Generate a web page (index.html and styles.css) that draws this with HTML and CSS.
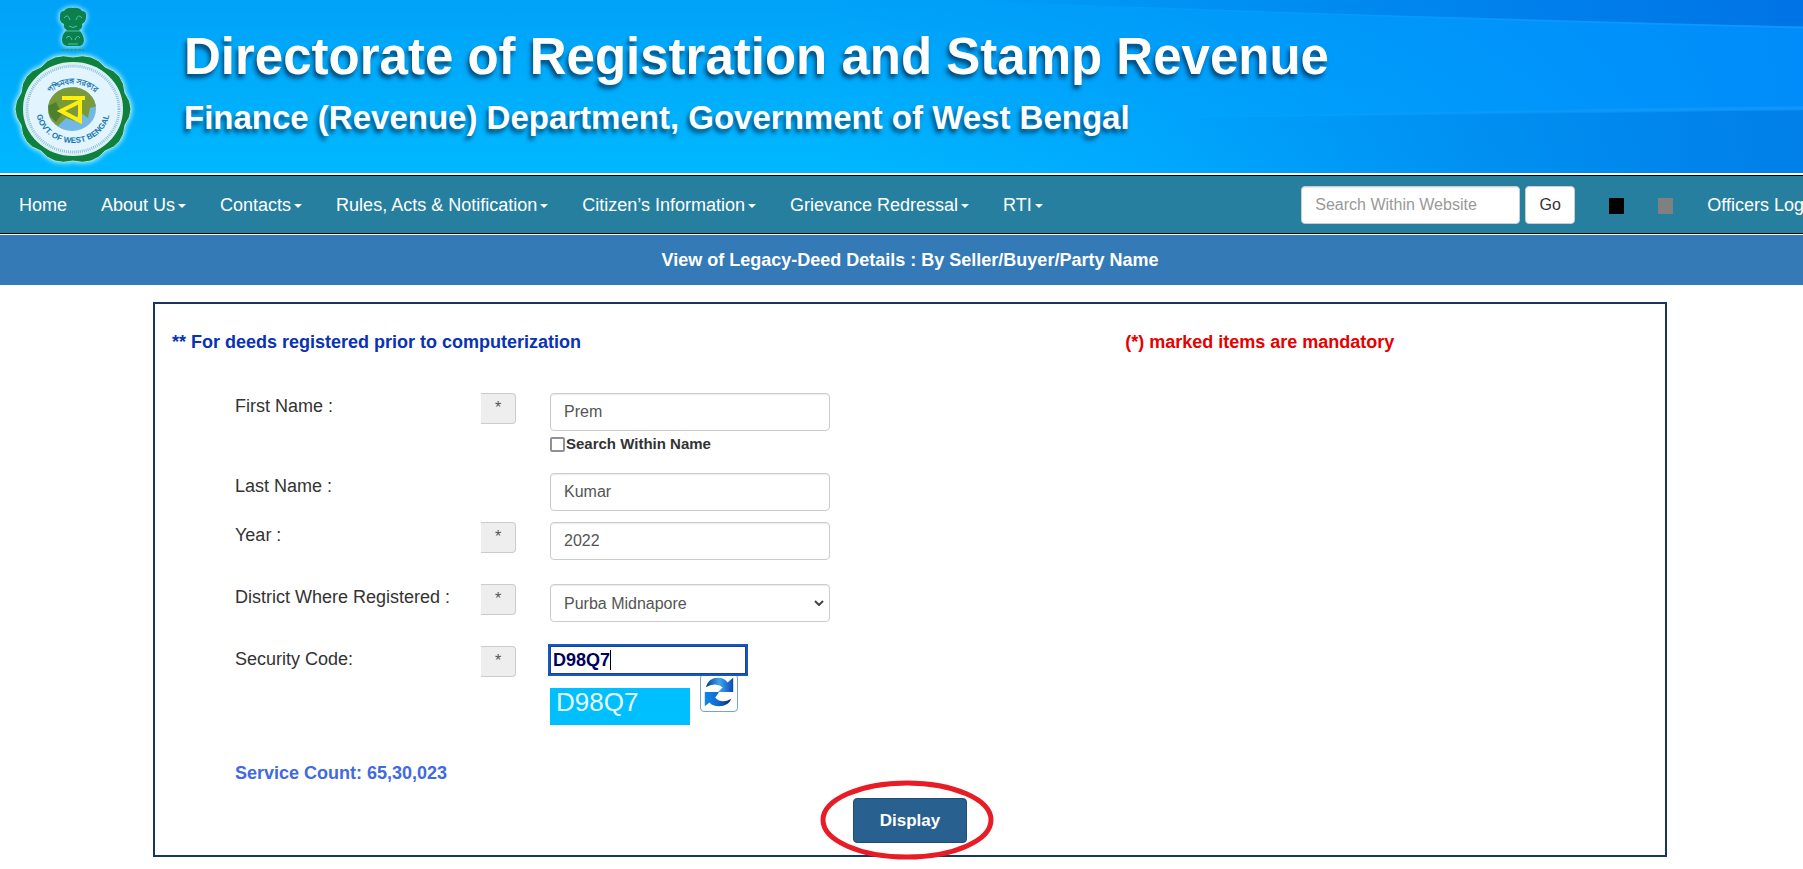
FILE: index.html
```html
<!DOCTYPE html>
<html lang="en">
<head>
  <meta charset="UTF-8">
  <meta name="viewport" content="width=device-width, initial-scale=1.0">
  <title>Directorate of Registration and Stamp Revenue</title>
  <link rel="stylesheet" href="styles.css">
</head>
<body>
  <div class="page">

    <!-- Banner -->
    <header class="banner">
      <svg class="banner-rays" viewBox="0 0 1820 173" preserveAspectRatio="none" aria-hidden="true">
        <defs>
          <linearGradient id="rayTop" x1="0" x2="1" y1="0" y2="0">
            <stop offset="0" stop-color="#0070dc" stop-opacity="0"/>
            <stop offset="1" stop-color="#0068dc" stop-opacity="0.7"/>
          </linearGradient>
          <linearGradient id="rayLow" x1="0" x2="1" y1="0" y2="0">
            <stop offset="0" stop-color="#0078d8" stop-opacity="0"/>
            <stop offset="1" stop-color="#0074d8" stop-opacity="0.55"/>
          </linearGradient>
          <linearGradient id="rayLine" x1="0" x2="1" y1="0" y2="0">
            <stop offset="0" stop-color="#20a8ff" stop-opacity="0"/>
            <stop offset="1" stop-color="#20a0ff" stop-opacity="0.5"/>
          </linearGradient>
        </defs>
        <path d="M950 0H1820V27Q1300 14 950 0Z" fill="url(#rayTop)"/>
        <path d="M950 0Q1300 14 1820 27V29Q1300 16 950 0Z" fill="url(#rayLine)"/>
        <path d="M1150 119Q1500 112 1820 109V173H1150Z" fill="url(#rayLow)"/>
        <path d="M1150 118Q1500 110 1820 106V110Q1500 114 1150 119Z" fill="url(#rayLine)"/>
      </svg>
      <svg class="emblem" viewBox="0 0 146 173" role="img" aria-label="Government of West Bengal emblem">
        <defs>
          <filter id="glow" x="-20%" y="-20%" width="140%" height="140%">
            <feGaussianBlur stdDeviation="2"/>
          </filter>
          <clipPath id="globe"><ellipse cx="72" cy="109" rx="24" ry="22"/></clipPath>
          <path id="scallop" d="M125 93Q124 73 105 67Q93 52 73 57Q53 52 41 67Q22 73 21 93Q9 109 21 125Q22 145 41 151Q53 166 73 161Q93 166 105 151Q124 145 125 125Q137 109 125 93Z"/>
          <path id="lions" d="M64 11Q67 7 73 8Q79 7 82 11Q87 11 86 17Q86 22 82 24Q83 28 79 30Q84 35 84 41Q83 46 79 46H67Q62 45 62 40Q62 34 67 30Q63 28 64 24Q59 22 60 16Q60 11 64 11Z"/>
          <path id="arcTop" d="M41 109A32 30 0 0 1 104 109"/>
          <path id="arcLow" d="M36 109A37 34 0 0 0 110 109"/>
        </defs>
        <g fill="#8fe6ff" stroke="#8fe6ff" stroke-width="3" filter="url(#glow)">
          <use href="#scallop"/>
          <use href="#lions"/>
        </g>
        <use href="#lions" fill="#0b7f4c"/>
        <path d="M64 18Q68 13 70 20M76 20Q78 13 82 18M69 26Q73 29 77 26M66 31H80M66 38Q70 34 72 40M75 40Q77 34 80 38M68 44H78" fill="none" stroke="#4fc6a8" stroke-width="1"/>
        <path d="M62 50H84" stroke="#2a9a92" stroke-width="2" stroke-dasharray="3 1"/>
        <use href="#scallop" fill="#0f8040" stroke="#9fe8e0" stroke-width="1"/>
        <ellipse cx="73" cy="109" rx="49" ry="46" fill="#e6f5fd" stroke="#d4f2ee" stroke-width="2"/>
        <ellipse cx="73" cy="109" rx="46" ry="43" fill="none" stroke="#8cc0e6" stroke-width="3" stroke-dasharray="1 1"/>
        <ellipse cx="73" cy="109" rx="43" ry="40" fill="#e2f4fd"/>
        <g clip-path="url(#globe)">
          <rect x="46" y="85" width="54" height="48" fill="#72b8e6"/>
          <path d="M46 98Q54 84 66 88L86 86Q98 94 98 106L90 108L88 118L80 112L74 121L66 118L58 126L48 118Z" fill="#7a9a38"/>
          <path d="M48 106L56 102L62 114L56 122L50 116Z" fill="#4d8030"/>
        </g>
        <path d="M62 98H85M80 99V121L61 111L79 102" fill="none" stroke="#ffee10" stroke-width="4"/>
        <text class="emblem-text"><textPath href="#arcTop" startOffset="50%" text-anchor="middle">পশ্চিমবঙ্গ সরকার</textPath></text>
        <text class="emblem-text"><textPath href="#arcLow" startOffset="50%" text-anchor="middle">GOVT. OF WEST BENGAL</textPath></text>
      </svg>
      <div class="banner-text">
        <h1>Directorate of Registration and Stamp Revenue</h1>
        <p>Finance (Revenue) Department, Government of West Bengal</p>
      </div>
    </header>

    <!-- Main menu -->
    <nav class="navbar">
      <ul class="menu">
        <li><a href="#">Home</a></li>
        <li><a href="#">About Us<span class="caret"></span></a></li>
        <li><a href="#">Contacts<span class="caret"></span></a></li>
        <li><a href="#">Rules, Acts &amp; Notification<span class="caret"></span></a></li>
        <li><a href="#">Citizen’s Information<span class="caret"></span></a></li>
        <li><a href="#">Grievance Redressal<span class="caret"></span></a></li>
        <li><a href="#">RTI<span class="caret"></span></a></li>
      </ul>
      <form class="search">
        <input type="text" class="form-control" placeholder="Search Within Website" aria-label="Search Within Website">
        <button type="button" class="go-btn">Go</button>
      </form>
      <div class="themes">
        <button type="button" class="swatch swatch-black" aria-label="Black theme"></button>
        <button type="button" class="swatch swatch-gray" aria-label="Gray theme"></button>
      </div>
      <a class="login" href="#">Officers Login</a>
    </nav>

    <h2 class="page-title">View of Legacy-Deed Details : By Seller/Buyer/Party Name</h2>

    <!-- Search form -->
    <main class="panel">
      <div class="notes">
        <p class="note-info">** For deeds registered prior to computerization</p>
        <p class="note-required">(*) marked items are mandatory</p>
      </div>

      <form class="deed-form">
        <div class="form-row tight">
          <label for="firstName">First Name :</label>
          <span class="addon">*</span>
          <div class="field">
            <input type="text" class="form-control" id="firstName" value="Prem">
            <div class="check-line">
              <input type="checkbox" id="withinName">
              <label for="withinName">Search Within Name</label>
            </div>
          </div>
        </div>

        <div class="form-row tight">
          <label for="lastName">Last Name :</label>
          <span></span>
          <div class="field">
            <input type="text" class="form-control" id="lastName" value="Kumar">
          </div>
        </div>

        <div class="form-row">
          <label for="year">Year :</label>
          <span class="addon">*</span>
          <div class="field">
            <input type="text" class="form-control" id="year" value="2022">
          </div>
        </div>

        <div class="form-row">
          <label for="district">District Where Registered :</label>
          <span class="addon">*</span>
          <div class="field select-field">
            <select class="form-control" id="district">
              <option>Purba Midnapore</option>
            </select>
            <svg class="chevron" viewBox="0 0 10 6" aria-hidden="true"><path d="M1 1L5 5L9 1" fill="none" stroke="#444" stroke-width="2"/></svg>
          </div>
        </div>

        <div class="form-row">
          <label for="code">Security Code:</label>
          <span class="addon">*</span>
          <div class="field code-field">
            <input type="text" class="code-input" id="code" value="D98Q7">
            <span class="text-cursor"></span>
            <div class="captcha-line">
              <span class="captcha">D98Q7</span>
              <button type="button" class="refresh" aria-label="Refresh code">
                <svg viewBox="0 0 38 38" aria-hidden="true">
                  <defs>
                    <linearGradient id="arrowTop" x1="0" x2="1" y1="0" y2="0">
                      <stop offset="0" stop-color="#0b3a8c"/>
                      <stop offset="0.5" stop-color="#3fa4f0"/>
                      <stop offset="1" stop-color="#0a49b4"/>
                    </linearGradient>
                    <linearGradient id="arrowLow" x1="0" x2="1" y1="0" y2="0">
                      <stop offset="0" stop-color="#1287ea"/>
                      <stop offset="0.5" stop-color="#1468cc"/>
                      <stop offset="1" stop-color="#06266e"/>
                    </linearGradient>
                  </defs>
                  <path d="M5 13Q8 3 18 3Q25 3 28 8L34 3V18L18 18L23 13Q15 7 5 13Z" fill="url(#arrowTop)"/>
                  <path d="M32 25Q29 33 19 33Q12 33 9 29L4 33V18L19 18L15 24Q22 31 32 25Z" fill="url(#arrowLow)"/>
                </svg>
              </button>
            </div>
          </div>
        </div>

        <p class="service-count">Service Count: 65,30,023</p>

        <div class="actions">
          <button type="button" class="display-btn">Display</button>
          <svg class="marker" viewBox="0 0 174 80" aria-hidden="true"><ellipse cx="87" cy="40" rx="84" ry="37" fill="none" stroke="#e81c24" stroke-width="5"/></svg>
        </div>
      </form>
    </main>
  </div>
</body>
</html>
```
FILE: styles.css
```css
* {
  box-sizing: border-box;
}
body {
  margin: 0;
  min-height: 100vh;
  font-family: "Liberation Sans", Arial, sans-serif;
  font-size: 18px;
  line-height: 26px;
  color: #333;
  background-color: #fff;
  overflow: hidden;
}
h1, h2, p, ul {
  margin: 0;
}
input, select, button {
  font-family: inherit;
}
/* the page runs a little wider than the window */
.page {
  width: calc(100% + 17px);
}

/* banner */
.banner {
  position: relative;
  display: flex;
  gap: 38px;
  height: 173px;
  background: linear-gradient(90deg, rgba(0, 136, 255, 0) 45%, #008cfa 100%), linear-gradient(180deg, #00a2f8, #00b8ff);
}
.banner-rays {
  position: absolute;
  inset: 0;
  width: 100%;
  height: 100%;
}
.emblem {
  position: relative;
  width: 146px;
  height: 173px;
}
.emblem-text {
  font-size: 8px;
  font-weight: bold;
  fill: #1478b4;
}
.banner-text {
  position: relative;
  padding-top: 26px;
  color: #fff;
  font-weight: bold;
  text-shadow: -2px 4px 4px rgba(0, 50, 90, 0.8);
  white-space: nowrap;
}
.banner-text h1 {
  font-size: 51px;
  line-height: 62px;
}
.banner-text p {
  font-size: 33px;
  line-height: 60px;
}

/* menu */
.navbar {
  display: flex;
  align-items: center;
  height: 59px;
  margin-top: 2px;
  padding: 0 2px;
  background-color: #267f9f;
  border-top: 1px solid #000;
  border-bottom: 1px solid #000;
  white-space: nowrap;
}
.navbar a {
  padding: 0 17px;
  color: #fff;
  text-decoration: none;
}
.navbar a:hover {
  text-decoration: underline;
}
.menu {
  display: flex;
  padding: 0;
  list-style: none;
}
.caret {
  display: inline-block;
  margin-left: 3px;
  vertical-align: middle;
  border-top: 4px solid #fff;
  border-left: 4px solid transparent;
  border-right: 4px solid transparent;
}
.search {
  display: flex;
  gap: 5px;
  margin-left: auto;
}
.search .form-control {
  width: 219px;
}
.form-control {
  display: block;
  width: 100%;
  height: 38px;
  padding: 6px 13px;
  font-size: 16px;
  color: #555;
  background-color: #fff;
  border: 1px solid #ccc;
  border-radius: 4px;
  box-shadow: inset 0 1px 1px rgba(0, 0, 0, 0.08);
}
.form-control::placeholder {
  color: #999;
}
.go-btn {
  width: 50px;
  height: 38px;
  padding: 0;
  font-size: 16px;
  color: #333;
  background-color: #fff;
  border: 1px solid #ccc;
  border-radius: 4px;
}
.themes {
  display: flex;
  gap: 34px;
  margin: 2px 17px 0 34px;
}
.swatch {
  width: 15px;
  height: 16px;
  padding: 0;
  border: 0;
}
.swatch-black {
  background-color: #000;
}
.swatch-gray {
  background-color: #808080;
}
.navbar .login {
  padding-right: 0;
}

.page-title {
  margin-top: 1px;
  padding: 12px;
  font-size: 18px;
  line-height: 26px;
  text-align: center;
  color: #fff;
  background-color: #337ab7;
}

/* form panel */
.panel {
  margin: 17px 153px 0;
  padding: 25px 17px 12px;
  border: 2px solid #17365d;
}
.notes {
  display: grid;
  grid-template-columns: 31fr 17fr;
  margin-bottom: 38px;
  font-weight: bold;
}
.note-info {
  color: #0a32b4;
}
.note-required {
  color: #e60000;
}
.form-row {
  display: grid;
  grid-template-columns: 246px 35px 280px;
  align-items: start;
  margin: 0 0 24px 63px;
}
.form-row.tight {
  margin-bottom: 11px;
}
.field {
  width: 280px;
  margin-left: 34px;
}
.addon {
  height: 31px;
  font-size: 16px;
  line-height: 28px;
  text-align: center;
  color: #555;
  background-color: #eee;
  border: 1px solid #ccc;
  border-left: 0;
  border-radius: 0 4px 4px 0;
}
.check-line {
  display: flex;
  align-items: center;
  gap: 1px;
  padding: 4px 0 9px;
  font-size: 15px;
  font-weight: bold;
  line-height: 18px;
}
.check-line input {
  appearance: none;
  width: 15px;
  height: 15px;
  margin: 0;
  background-color: #fff;
  border: 2px solid #8f8f9d;
  border-radius: 2px;
}
.check-line input:checked {
  background-color: #0060df;
}
.select-field {
  position: relative;
}
.select-field select {
  appearance: none;
}
.chevron {
  position: absolute;
  top: 16px;
  right: 6px;
  width: 10px;
  height: 6px;
}
.code-field {
  position: relative;
}
.code-input {
  display: block;
  width: 196px;
  height: 28px;
  padding: 0 2px;
  font-size: 18px;
  font-weight: bold;
  color: #000060;
  border: 1px solid #1c3f94;
  outline: 2px solid #1259c3;
}
.text-cursor {
  position: absolute;
  top: 4px;
  left: 60px;
  width: 1px;
  height: 20px;
  background-color: #000;
}
.captcha-line {
  display: flex;
  align-items: flex-start;
  gap: 10px;
}
.captcha {
  width: 140px;
  height: 37px;
  margin-top: 14px;
  padding-left: 6px;
  font-size: 26px;
  line-height: 28px;
  color: #e6fbff;
  background-color: #00bfff;
}
.refresh {
  width: 38px;
  height: 38px;
  padding: 0;
  background-color: #fff;
  border: 1px solid #7f9fc8;
  border-radius: 4px;
}
.refresh svg {
  display: block;
  width: 100%;
}
.service-count {
  margin: 35px 0 12px 63px;
  font-weight: bold;
  color: #4169e1;
}
.actions {
  position: relative;
  display: flex;
  justify-content: center;
}
.display-btn {
  width: 114px;
  height: 45px;
  font-size: 17px;
  font-weight: bold;
  color: #fff;
  background-color: #286090;
  border: 1px solid #204d74;
  border-radius: 4px;
}
.display-btn:hover {
  background-color: #204d74;
}
/* red ring around the button */
.marker {
  position: absolute;
  top: -18px;
  left: calc(50% - 90px);
  width: 174px;
  height: 80px;
  pointer-events: none;
}
```
